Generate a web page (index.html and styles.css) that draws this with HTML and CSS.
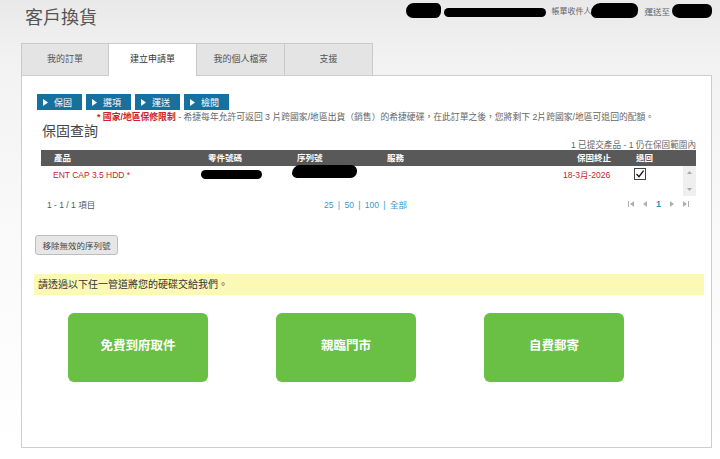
FILE: index.html
```html
<!DOCTYPE html>
<html lang="zh-Hant">
<head>
    <meta charset="UTF-8">
    <meta name="viewport" content="width=device-width, initial-scale=1.0">
    <title>客戶換貨</title>
    <link rel="stylesheet" href="styles.css">
</head>
<body>
    <div class="header">
        <h1>客戶換貨</h1>
        <div class="account">
            <span class="redact r1"></span>
            <span class="redact r2"></span>
            <span class="acct-label">帳單收件人</span>
            <span class="redact r3"></span>
            <span class="acct-label ship">運送至</span>
            <span class="redact r4"></span>
        </div>
    </div>

    <!-- Tabs -->
    <ul class="tabs">
        <li>我的訂單</li>
        <li class="active">建立申請單</li>
        <li>我的個人檔案</li>
        <li>支援</li>
    </ul>

    <div class="panel">
        <!-- Wizard steps -->
        <div class="steps">
            <div class="step"><svg width="5" height="7" viewBox="0 0 5 7"><path d="M0 0L5 3.5L0 7Z" fill="#fff"/></svg>保固</div>
            <div class="step"><svg width="5" height="7" viewBox="0 0 5 7"><path d="M0 0L5 3.5L0 7Z" fill="#fff"/></svg>選項</div>
            <div class="step"><svg width="5" height="7" viewBox="0 0 5 7"><path d="M0 0L5 3.5L0 7Z" fill="#fff"/></svg>運送</div>
            <div class="step"><svg width="5" height="7" viewBox="0 0 5 7"><path d="M0 0L5 3.5L0 7Z" fill="#fff"/></svg>檢閱</div>
        </div>

        <p class="note"><span class="note-red">* 國家/地區保修限制</span> - 希捷每年允許可返回 3 片跨國家/地區出貨（銷售）的希捷硬碟，在此訂單之後，您將剩下 2片跨國家/地區可退回的配額。</p>
        <h2 class="section-title">保固查詢</h2>
        <p class="count">1 已提交產品 - 1 仍在保固範圍內</p>

        <!-- Warranty table -->
        <div class="grid-table">
            <div class="grid-head">
                <div class="c-product">產品</div>
                <div class="c-part">零件號碼</div>
                <div class="c-serial">序列號</div>
                <div class="c-service">服務</div>
                <div class="c-end">保固終止</div>
                <div class="c-return">退回</div>
                <div></div>
            </div>
            <div class="grid-body">
                <div class="c-product red">ENT CAP 3.5 HDD *</div>
                <div class="c-part"><span class="redact part-blob"></span></div>
                <div class="c-serial"><span class="redact serial-blob"></span></div>
                <div class="c-service"></div>
                <div class="c-end red">18-3月-2026</div>
                <div class="c-return">
                    <svg width="12" height="12" viewBox="0 0 12 12"><rect x="0.5" y="0.5" width="11" height="11" fill="#fff" stroke="#444"/><path d="M2.5 6L5 8.7L9.6 2.6" fill="none" stroke="#111" stroke-width="1.3"/></svg>
                </div>
                <div class="scrollbar">
                    <svg width="5" height="3" viewBox="0 0 5 3"><path d="M0 3L2.5 0L5 3Z" fill="#aaa"/></svg>
                    <svg width="5" height="3" viewBox="0 0 5 3"><path d="M0 0L2.5 3L5 0Z" fill="#aaa"/></svg>
                </div>
            </div>
            <div class="pager">
                <div class="pager-info">1 - 1 / 1 項目</div>
                <div class="page-sizes">25 <i>|</i> 50 <i>|</i> 100 <i>|</i> 全部</div>
                <div class="pager-nav">
                    <svg width="6" height="6" viewBox="0 0 6 6"><path d="M0 0H1V6H0ZM6 0L2 3L6 6Z" fill="#b0b0b0"/></svg>
                    <svg width="4" height="6" viewBox="0 0 4 6"><path d="M4 0L0 3L4 6Z" fill="#b0b0b0"/></svg>
                    <b>1</b>
                    <svg width="4" height="6" viewBox="0 0 4 6"><path d="M0 0L4 3L0 6Z" fill="#b0b0b0"/></svg>
                    <svg width="6" height="6" viewBox="0 0 6 6"><path d="M0 0L4 3L0 6ZM5 0H6V6H5Z" fill="#b0b0b0"/></svg>
                </div>
            </div>
        </div>

        <button class="remove-btn">移除無效的序列號</button>

        <div class="notice">請透過以下任一管道將您的硬碟交給我們。</div>

        <div class="options">
            <div class="option">免費到府取件</div>
            <div class="option">親臨門市</div>
            <div class="option">自費郵寄</div>
        </div>
    </div>
</body>
</html>
```

FILE: styles.css
```css
body {
    margin: 0;
    width: 720px;
    height: 459px;
    font-family: "Liberation Sans", "Noto Sans CJK TC", sans-serif;
    color: #555;
    background: linear-gradient(180deg, #e9e9e9 0, #f2f2f2 60px, #f9f9f9 220px, #ffffff 459px);
    overflow: hidden;
}

.header {
    display: flex;
    justify-content: space-between;
    align-items: flex-start;
    height: 43px;
    padding-right: 8px;
}

.header h1 {
    margin: 0;
    padding: 7px 0 0 25px;
    font-size: 18px;
    line-height: 22px;
    font-weight: normal;
    color: #555;
}

.account {
    display: flex;
    align-items: flex-start;
    padding-top: 3px;
}

.redact {
    display: inline-block;
    background: #000;
    border-radius: 8px;
}

.r1 { width: 35px; height: 15px; border-radius: 10px 6px 8px 9px; }
.r2 { width: 102px; height: 9px; margin: 5px 0 0 3px; }
.r3 { width: 47px; height: 15px; border-radius: 12px 8px 9px 7px; }
.r4 { width: 40px; height: 14px; margin: 1px 0 0 2px; border-radius: 9px 7px 8px 10px; }

.acct-label {
    margin: 4px 0 0 5px;
    font-size: 8px;
    line-height: 10px;
    color: #666;
    white-space: nowrap;
}

.acct-label.ship {
    margin-left: 6px;
    font-size: 8.5px;
}

.tabs {
    display: flex;
    align-items: flex-start;
    margin: 0 0 0 21px;
    padding: 0;
    list-style: none;
    height: 32px;
}

.tabs li {
    box-sizing: border-box;
    width: 88px;
    height: 32px;
    border: 1px solid #c9c9c9;
    border-bottom: none;
    border-left: none;
    background: #e4e4e4;
    text-align: center;
    font-size: 9px;
    line-height: 31px;
    color: #555;
}

.tabs li:first-child {
    border-left: 1px solid #c9c9c9;
}

.tabs li.active {
    position: relative;
    height: 33px;
    background: #fff;
    color: #333;
}

.panel {
    box-sizing: border-box;
    height: 373px;
    margin: 0 8px 0 21px;
    padding: 0 7px 0 12px;
    border: 1px solid #cdcdcd;
    background: #fff;
}

.steps {
    display: flex;
    gap: 4px;
    margin: 18px 0 0 3px;
}

.step {
    display: flex;
    align-items: center;
    gap: 6px;
    box-sizing: border-box;
    width: 45px;
    height: 16px;
    padding-left: 6px;
    background: #17719f;
    color: #fff;
    font-size: 9px;
}

.note {
    margin: 2px 0 0 63px;
    font-size: 8.8px;
    line-height: 10px;
    color: #666;
    white-space: nowrap;
}

.note-red {
    color: #cc2229;
    font-weight: bold;
}

.section-title {
    margin: 0 0 0 8px;
    font-size: 14px;
    line-height: 18px;
    font-weight: normal;
    color: #444;
}

.count {
    margin: 0 8px 0 0;
    text-align: right;
    font-size: 8.6px;
    line-height: 10px;
    color: #666;
}

.grid-table {
    margin: 0 8px 0 7px;
}

.grid-head,
.grid-body {
    display: grid;
    grid-template-columns: 159px 90px 90px 175px 70px 58px 13px;
}

.grid-head {
    height: 16px;
    background: #595959;
    color: #fff;
    font-size: 8.5px;
    line-height: 16px;
    font-weight: bold;
}

.grid-head .c-product { padding-left: 13px; }
.grid-head .c-part { padding-left: 8px; }
.grid-head .c-serial { padding-left: 7px; }
.grid-head .c-service { padding-left: 7px; }
.grid-head .c-end { padding-left: 22px; }
.grid-head .c-return { padding-left: 11px; }

.grid-body {
    height: 30px;
    font-size: 8.5px;
    line-height: 14px;
}

.grid-body > div {
    padding-top: 2px;
}

.grid-body .c-product { padding-left: 12px; }
.grid-body .c-end { padding-left: 8px; }
.grid-body .c-return { padding-left: 9px; }

.red {
    color: #c0282d;
}

.part-blob {
    width: 61px;
    height: 9px;
    margin: 2px 0 0 1px;
}

.serial-blob {
    width: 65px;
    height: 13px;
    margin: -3px 0 0 2px;
    border-radius: 10px 7px 8px 6px;
}

.grid-body .scrollbar {
    display: flex;
    flex-direction: column;
    justify-content: space-between;
    align-items: center;
    padding: 5px 0 5px;
    box-sizing: border-box;
    height: 30px;
    background: #efefef;
}

.pager {
    display: grid;
    grid-template-columns: 283px 120px 1fr;
    align-items: center;
    height: 14px;
    margin-top: 1px;
    font-size: 8.5px;
}

.pager-info {
    padding-left: 6px;
    color: #555;
}

.page-sizes {
    color: #3797cf;
}

.page-sizes i {
    font-style: normal;
    margin: 0 2px;
}

.pager-nav {
    display: flex;
    justify-content: flex-end;
    align-items: center;
    gap: 9px;
    padding-right: 7px;
}

.pager-nav b {
    color: #2f8fcc;
    font-size: 9px;
}

.remove-btn {
    display: block;
    width: 83px;
    height: 20px;
    margin: 24px 0 0 1px;
    padding: 0;
    border: 1px solid #bdbdbd;
    border-radius: 3px;
    background: #e6e6e6;
    color: #444;
    font-family: inherit;
    font-size: 8.5px;
}

.notice {
    height: 21px;
    margin-top: 19px;
    padding-left: 4px;
    background: #fcf9b4;
    color: #333;
    font-size: 10px;
    line-height: 21px;
}

.options {
    display: flex;
    gap: 68px;
    margin: 18px 0 0 34px;
}

.option {
    display: flex;
    align-items: center;
    justify-content: center;
    width: 140px;
    height: 69px;
    padding-bottom: 6px;
    box-sizing: border-box;
    border-radius: 6px;
    background: #6abf45;
    color: #fff;
    font-size: 12.5px;
    font-weight: bold;
}
```
